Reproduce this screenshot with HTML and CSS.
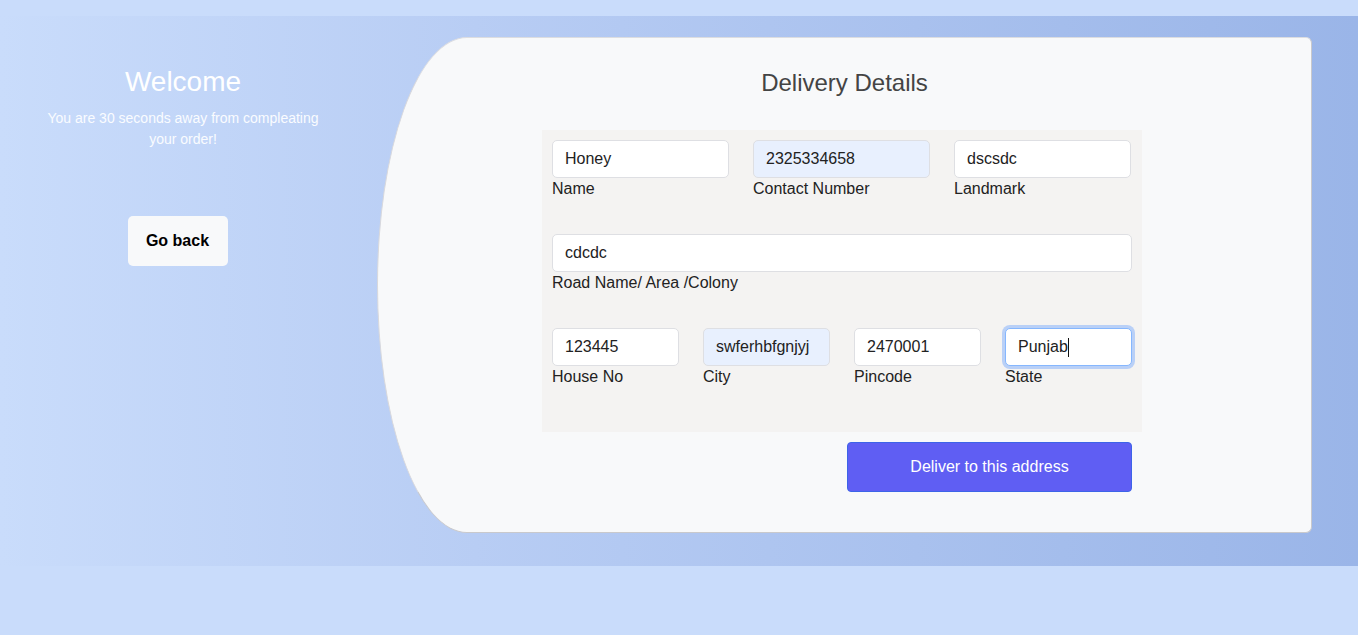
FILE: index.html
```html
<!DOCTYPE html>
<html>
<head>
<meta charset="utf-8">
<link rel="stylesheet" href="styles.css">
</head>
<body>
<div class="wrap">
  <aside class="side">
    <h1 class="welcome">Welcome</h1>
    <p class="sub">You are 30 seconds away from compleating your order!</p>
    <button class="back">Go back</button>
  </aside>
  <main class="card">
    <h2 class="title">Delivery Details</h2>
    <form class="form">
      <div class="row row3">
        <div class="field"><input class="inp" value="Honey"><label>Name</label></div>
        <div class="field"><input class="inp auto" value="2325334658"><label>Contact Number</label></div>
        <div class="field"><input class="inp" value="dscsdc"><label>Landmark</label></div>
      </div>
      <div class="row row1">
        <div class="field"><input class="inp" value="cdcdc"><label>Road Name/ Area /Colony</label></div>
      </div>
      <div class="row row4">
        <div class="field"><input class="inp" value="123445"><label>House No</label></div>
        <div class="field"><input class="inp auto" value="swferhbfgnjyj"><label>City</label></div>
        <div class="field"><input class="inp" value="2470001"><label>Pincode</label></div>
        <div class="field"><div class="inp focus">Punjab<span class="caret"></span></div><label>State</label></div>
      </div>
    </form>
    <div class="actions"><button class="deliver" type="button">Deliver to this address</button></div>
  </main>
</div>
</body>
</html>
```

FILE: styles.css
```css
* { box-sizing: border-box; }
html, body { margin: 0; }
body {
  background: #c9dcfb;
  font-family: "Liberation Sans", Arial, sans-serif;
  height: 635px;
  padding-top: 16px;
}
.wrap {
  height: 550px;
  display: flex;
  background: linear-gradient(to right, #c9dcfb 0%, #b8cdf4 35%, #9ab5e8 100%);
}
.side {
  width: 366px;
  flex: none;
  text-align: center;
  color: #fff;
  padding-top: 50px;
}
.welcome {
  margin: 0;
  font-size: 28px;
  font-weight: normal;
  line-height: 32px;
}
.sub {
  margin: 10px auto 0;
  width: 290px;
  font-size: 14px;
  line-height: 21px;
  color: #fafcff;
}
.back {
  margin-top: 66px;
  margin-left: -11px;
  width: 100px;
  height: 50px;
  border: none;
  border-radius: 5px;
  background: #f8f9fa;
  font-family: "Liberation Sans", Arial, sans-serif;
  font-weight: bold;
  font-size: 16px;
  color: #000;
}
.card {
  margin-top: 21px;
  margin-left: 11px;
  width: 935px;
  height: 496px;
  flex: none;
  background: #f8f9fa;
  border: 1px solid #c9c9cc;
  border-top-color: #dcdde0;
  border-left-color: #d8d8dc;
  border-radius: 90px 6px 6px 90px / 248px 6px 6px 248px;
}
.title {
  margin: 31px 0 0;
  text-align: center;
  font-size: 24px;
  font-weight: normal;
  line-height: 28px;
  color: #444;
}
.form {
  margin: 33px 0 0 164px;
  width: 600px;
  height: 302px;
  background: #f4f3f2;
  padding: 10px;
}
.row {
  display: grid;
  column-gap: 24px;
  margin-bottom: 36px;
}
.row3 { grid-template-columns: 177px 177px 177px; }
.row1 { grid-template-columns: 1fr; }
.row4 { grid-template-columns: repeat(4, 1fr); column-gap: 24px; }
.field { display: flex; flex-direction: column; }
.inp {
  height: 38px;
  width: 100%;
  border: 1px solid #dedfe3;
  border-radius: 5px;
  background: #fff;
  padding: 0 12px;
  font-family: "Liberation Sans", Arial, sans-serif;
  font-size: 16px;
  color: #222;
  outline: none;
}
.inp.auto { background: #e8f0fe; }
.inp.focus {
  display: flex;
  align-items: center;
  border-color: #86b7fe;
  box-shadow: 0 0 0 3px #b9d0f7;
}
.caret {
  display: inline-block;
  width: 1px;
  height: 19px;
  background: #111;
}
label {
  font-size: 16px;
  line-height: 18px;
  padding-top: 2px;
  color: #222;
}
.actions {
  display: flex;
  justify-content: flex-end;
  width: 600px;
  margin-left: 164px;
  padding: 10px 10px 0 0;
}
.deliver {
  width: 285px;
  height: 50px;
  background: #5f5ef3;
  border: 1px solid #3d64e8;
  border-radius: 4px;
  color: #fff;
  font-family: "Liberation Sans", Arial, sans-serif;
  font-size: 16px;
}
```
